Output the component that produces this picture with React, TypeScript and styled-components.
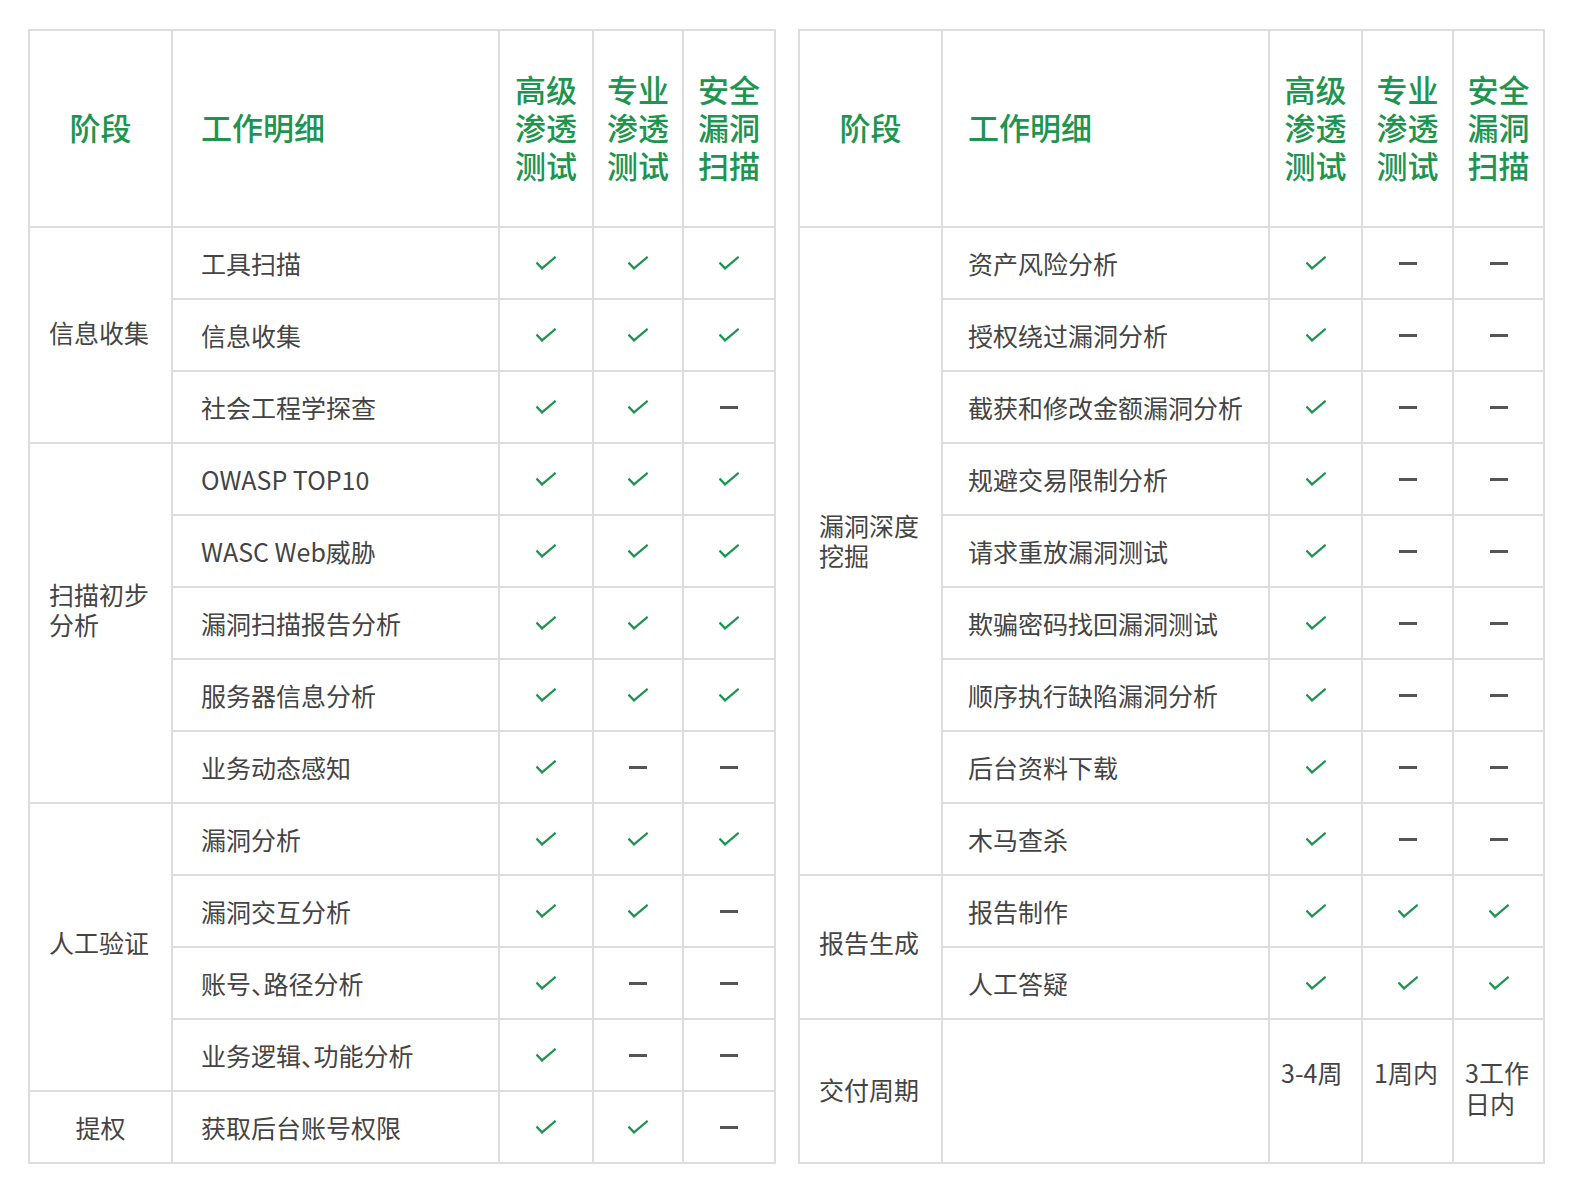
import React from 'react';
import styled, { createGlobalStyle } from 'styled-components';

const GlobalStyle = createGlobalStyle`
  body {
    margin: 0;
    background: #ffffff;
    font-family: "Noto Sans CJK SC", "Noto Sans", sans-serif;
  }
`;

const GREEN = '#1d9550';
const LINE = '#dddddd';
const TEXT = '#444444';

type Mark = 'y' | 'n';

interface Item {
  name: string;
  marks: Mark[];
}

interface Group {
  stage: string;
  center?: boolean;
  lift: number; // stage labels sit a little above the middle of their span
  items: Item[];
}

const Page = styled.div`
  display: flex;
  align-items: flex-start;
  gap: 22px;
  padding: 29px 0 0 28px;
`;

const Table = styled.div<{ $cols: string; $rows: string }>`
  display: grid;
  grid-template-columns: ${(p) => p.$cols};
  grid-template-rows: ${(p) => p.$rows};
  border-top: 2px solid ${LINE};
  border-left: 2px solid ${LINE};
`;

const Cell = styled.div`
  box-sizing: border-box;
  border-right: 2px solid ${LINE};
  border-bottom: 2px solid ${LINE};
  display: flex;
  align-items: center;
  min-width: 0;
`;

const StageHead = styled(Cell)`
  justify-content: center;
  padding-bottom: 4px;
  color: ${GREEN};
  font-size: 31px;
  font-weight: 500;
`;

const DetailHead = styled(Cell)<{ $pad: number }>`
  padding: 0 0 4px ${(p) => p.$pad}px;
  color: ${GREEN};
  font-size: 31px;
  font-weight: 500;
`;

const ProductHead = styled(Cell)`
  flex-direction: column;
  justify-content: center;
  padding-bottom: 4px;
  color: ${GREEN};
  font-size: 31px;
  font-weight: 500;
  line-height: 38px;
`;

const StageCell = styled(Cell)<{ $span: number; $center?: boolean; $lift: number }>`
  grid-row: span ${(p) => p.$span};
  padding: 0 19px ${(p) => p.$lift}px;
  justify-content: ${(p) => (p.$center ? 'center' : 'flex-start')};
  color: ${TEXT};
  font-size: 25px;
  line-height: 30px;
`;

const DetailCell = styled(Cell)<{ $pad: number }>`
  padding-left: ${(p) => p.$pad}px;
  color: ${TEXT};
  font-size: 25px;
  white-space: nowrap;
  font-feature-settings: "halt";
`;

const MarkCell = styled(Cell)`
  justify-content: center;
`;

const ValueCell = styled(Cell)`
  align-items: flex-start;
  padding: 37px 10px 0 11px;
  color: ${TEXT};
  font-size: 25px;
  line-height: 31px;
`;

const Dash = styled.span`
  display: block;
  width: 18px;
  height: 3px;
  background: #555555;
`;

const Check = () => (
  <svg width="20" height="15" viewBox="0 0 20 15" fill="none">
    <path d="M1.2 7.4 L6 12.4 L18.8 1.6" stroke={GREEN} strokeWidth="2.3" strokeLinecap="square" />
  </svg>
);

const products = [
  ['高级', '渗透', '测试'],
  ['专业', '渗透', '测试'],
  ['安全', '漏洞', '扫描'],
];

const yyy: Mark[] = ['y', 'y', 'y'];
const yyn: Mark[] = ['y', 'y', 'n'];
const ynn: Mark[] = ['y', 'n', 'n'];

const leftGroups: Group[] = [
  {
    stage: '信息收集',
    lift: 6,
    items: [
      { name: '工具扫描', marks: yyy },
      { name: '信息收集', marks: yyy },
      { name: '社会工程学探查', marks: yyn },
    ],
  },
  {
    stage: '扫描初步分析',
    lift: 28,
    items: [
      { name: 'OWASP TOP10', marks: yyy },
      { name: 'WASC Web威胁', marks: yyy },
      { name: '漏洞扫描报告分析', marks: yyy },
      { name: '服务器信息分析', marks: yyy },
      { name: '业务动态感知', marks: ynn },
    ],
  },
  {
    stage: '人工验证',
    lift: 10,
    items: [
      { name: '漏洞分析', marks: yyy },
      { name: '漏洞交互分析', marks: yyn },
      { name: '账号、路径分析', marks: ynn },
      { name: '业务逻辑、功能分析', marks: ynn },
    ],
  },
  {
    stage: '提权',
    center: true,
    lift: 0,
    items: [{ name: '获取后台账号权限', marks: yyn }],
  },
];

const rightGroups: Group[] = [
  {
    stage: '漏洞深度挖掘',
    lift: 22,
    items: [
      '资产风险分析',
      '授权绕过漏洞分析',
      '截获和修改金额漏洞分析',
      '规避交易限制分析',
      '请求重放漏洞测试',
      '欺骗密码找回漏洞测试',
      '顺序执行缺陷漏洞分析',
      '后台资料下载',
      '木马查杀',
    ].map((name) => ({ name, marks: ynn })),
  },
  {
    stage: '报告生成',
    lift: 10,
    items: [
      { name: '报告制作', marks: yyy },
      { name: '人工答疑', marks: yyy },
    ],
  },
];

const delivery = ['3-4周', '1周内', '3工作日内'];

const Header: React.FC<{ pad: number }> = ({ pad }) => (
  <>
    <StageHead>阶段</StageHead>
    <DetailHead $pad={pad}>工作明细</DetailHead>
    {products.map((lines, i) => (
      <ProductHead key={i}>
        {lines.map((l) => (
          <span key={l}>{l}</span>
        ))}
      </ProductHead>
    ))}
  </>
);

const Groups: React.FC<{ groups: Group[]; pad: number }> = ({ groups, pad }) => (
  <>
    {groups.map((g) => (
      <React.Fragment key={g.stage}>
        <StageCell $span={g.items.length} $center={g.center} $lift={g.lift}>
          {g.stage}
        </StageCell>
        {g.items.map((item) => (
          <React.Fragment key={item.name}>
            <DetailCell $pad={pad}>{item.name}</DetailCell>
            {item.marks.map((m, i) => (
              <MarkCell key={i}>{m === 'y' ? <Check /> : <Dash />}</MarkCell>
            ))}
          </React.Fragment>
        ))}
      </React.Fragment>
    ))}
  </>
);

const App: React.FC = () => (
  <>
    <GlobalStyle />
    <Page>
      <Table $cols="143px 327px 94px 90px 92px" $rows="197px repeat(13, 72px)">
        <Header pad={28} />
        <Groups groups={leftGroups} pad={28} />
      </Table>
      <Table $cols="143px 327px 93px 91px 91px" $rows="197px repeat(11, 72px) 144px">
        <Header pad={25} />
        <Groups groups={rightGroups} pad={25} />
        <StageCell $span={1} $lift={4}>交付周期</StageCell>
        <Cell />
        {delivery.map((v) => (
          <ValueCell key={v}>{v}</ValueCell>
        ))}
      </Table>
    </Page>
  </>
);

export default App;
